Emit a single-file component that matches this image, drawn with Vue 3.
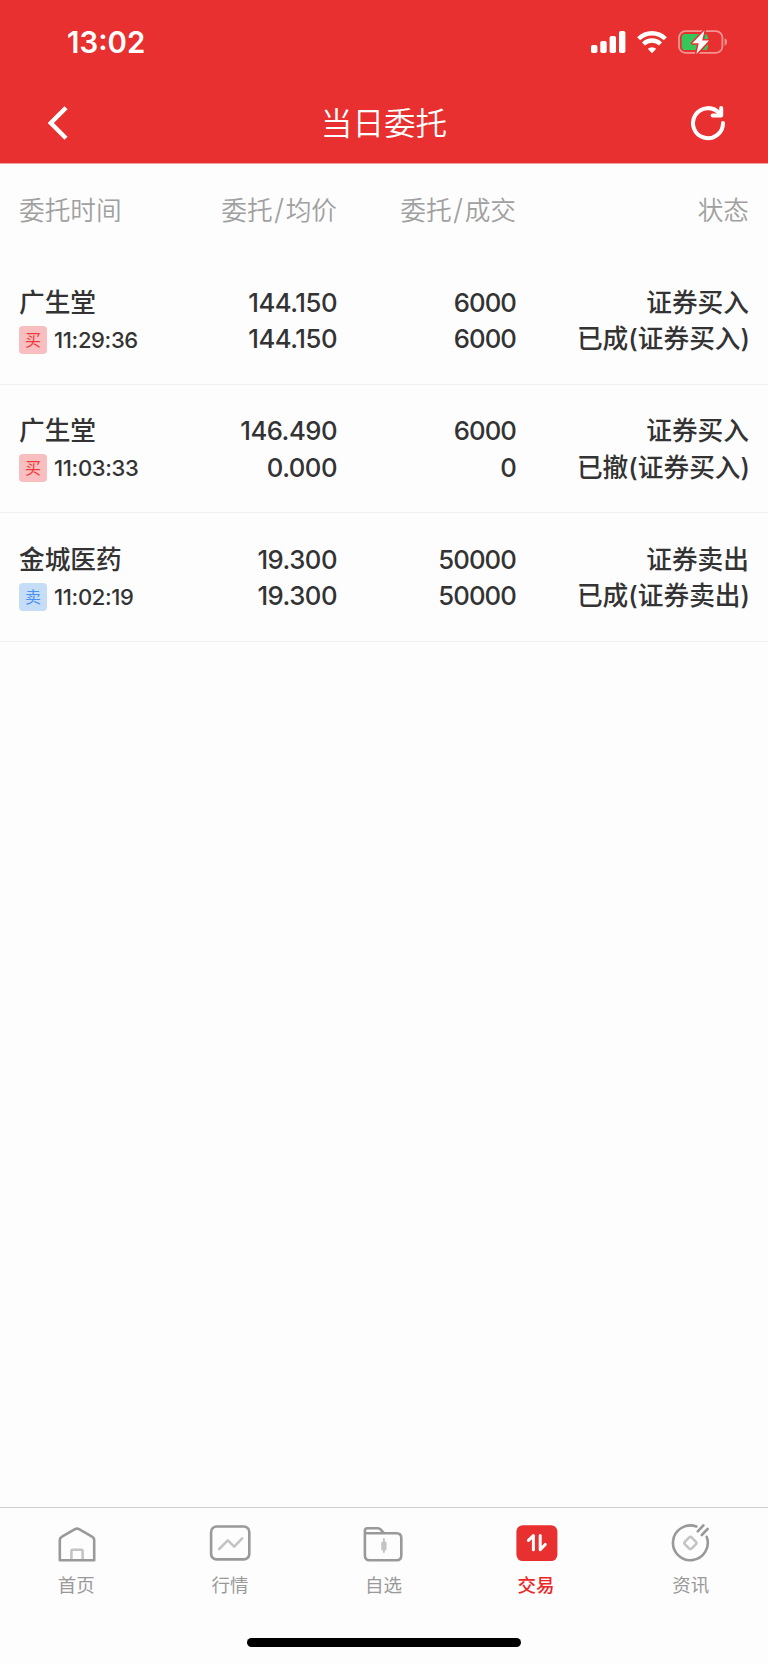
<script setup>
import { ref } from "vue";

const active = ref("trade");

const orders = ref([
  {
    id: 1,
    name: "广生堂",
    side: "买",
    time: "11:29:36",
    price: "144.150",
    avg: "144.150",
    amount: "6000",
    deal: "6000",
    type: "证券买入",
    status: "已成(证券买入)",
  },
  {
    id: 2,
    name: "广生堂",
    side: "买",
    time: "11:03:33",
    price: "146.490",
    avg: "0.000",
    amount: "6000",
    deal: "0",
    type: "证券买入",
    status: "已撤(证券买入)",
  },
  {
    id: 3,
    name: "金城医药",
    side: "卖",
    time: "11:02:19",
    price: "19.300",
    avg: "19.300",
    amount: "50000",
    deal: "50000",
    type: "证券卖出",
    status: "已成(证券卖出)",
  },
]);

const tabs = [
  { key: "home", label: "首页" },
  { key: "market", label: "行情" },
  { key: "favorite", label: "自选" },
  { key: "trade", label: "交易" },
  { key: "news", label: "资讯" },
];
</script>

<template>
  <main class="page">
    <header class="top">
      <div class="status-bar">
        <span class="clock">13:02</span>
        <div class="status-icons">
          <svg class="signal" width="35" height="22" viewBox="0 0 35 22" fill="#fff">
            <rect x="0" y="14" width="6.4" height="8" rx="1.8" />
            <rect x="9.3" y="10" width="6.4" height="12" rx="1.8" />
            <rect x="18.6" y="5" width="6.4" height="17" rx="1.8" />
            <rect x="28" y="0" width="6.4" height="22" rx="1.8" />
          </svg>
          <svg class="wifi" width="30" height="22" viewBox="0 0 30 22">
            <g fill="none" stroke="#fff" stroke-width="4.4">
              <path d="M1.7 7.7a19 19 0 0 1 26.6 0" />
              <path d="M6.5 13a12.2 12.2 0 0 1 17 0" />
            </g>
            <path
              d="M10.8 17.8a6.2 6.2 0 0 1 8.4 0l-3.7 3.9q-.5.5-1 0z"
              fill="#fff"
            />
          </svg>
          <svg class="battery" width="50" height="26" viewBox="0 0 50 26">
            <rect
              x="1"
              y="2.2"
              width="43.4"
              height="21.6"
              rx="6.4"
              fill="none"
              stroke="#f39392"
              stroke-width="1.8"
            />
            <path d="M46.7 9q2.4 1.2 2.4 4t-2.4 4z" fill="#f39392" />
            <rect x="3.7" y="5" width="26.3" height="16" rx="3.6" fill="#35c759" />
            <path
              d="M26.5 1.5L14.3 14.2h6.4L18.4 25 31 11.6h-6.8z"
              fill="#fff"
              stroke="#e83030"
              stroke-width="3"
              stroke-linejoin="round"
              paint-order="stroke"
            />
          </svg>
        </div>
      </div>
      <nav class="nav-bar">
        <svg class="back" width="24" height="36" viewBox="0 0 24 36">
          <path d="M20 2.8L4.8 18 20 33.2" fill="none" stroke="#fff" stroke-width="4.4" />
        </svg>
        <h1>当日委托</h1>
        <svg class="refresh" width="36" height="36" viewBox="0 0 36 36">
          <g
            fill="none"
            stroke="#fff"
            stroke-width="4"
            stroke-linecap="round"
            stroke-linejoin="round"
          >
            <path d="M33 18A15 15 0 1 1 29.5 8.5" />
            <path d="M31.2 3v7.6h-8.6" />
          </g>
        </svg>
      </nav>
    </header>

    <section class="list">
      <div class="row head">
        <span>委托时间</span>
        <span>委托<i>/</i>均价</span>
        <span>委托<i>/</i>成交</span>
        <span>状态</span>
      </div>
      <div v-for="item in orders" :key="item.id" class="row order">
        <div>
          <p>{{ item.name }}</p>
          <p class="when">
            <i :class="['tag', item.side === '买' ? 'buy' : 'sell']">{{ item.side }}</i>
            <span class="time">{{ item.time }}</span>
          </p>
        </div>
        <div class="price">
          <p>{{ item.price }}</p>
          <p>{{ item.avg }}</p>
        </div>
        <div class="amount">
          <p>{{ item.amount }}</p>
          <p>{{ item.deal }}</p>
        </div>
        <div class="status">
          <p>{{ item.type }}</p>
          <p>{{ item.status }}</p>
        </div>
      </div>
    </section>

    <footer class="bottom">
      <div class="tabs">
        <div
          v-for="tab in tabs"
          :key="tab.key"
          :class="['tab', { active: active === tab.key }]"
          @click="active = tab.key"
        >
          <svg
            width="44"
            height="40"
            viewBox="0 0 44 40"
            fill="none"
            stroke="#999"
            stroke-width="2.6"
            stroke-linecap="round"
            stroke-linejoin="round"
          >
            <template v-if="tab.key === 'home'">
              <path d="M16.4 37V28q0-1.3 1.3-1.3h8.6q1.3 0 1.3 1.3v9" stroke="#c4c4c4" />
              <path
                d="M4.8 37.3V17.5q0-2.6 2.2-3.8L20 6.2q2-1.1 4 0l13 7.5q2.2 1.2 2.2 3.8v19.8z"
              />
            </template>
            <template v-else-if="tab.key === 'market'">
              <rect x="3.1" y="3.5" width="38.2" height="32.9" rx="5.5" />
              <path d="M11.2 26l8.6-8.6 6.4 6.2 8-8.2" stroke="#c4c4c4" />
            </template>
            <template v-else-if="tab.key === 'favorite'">
              <path
                d="M2.9 10.3V7.6q0-2.4 2.4-2.4h10.6q1.6 0 2.6 1.1l3.4 3.9h12.6q4.8 0 4.8 4.8v17.4q0 4.8-4.8 4.8H7.7q-4.8 0-4.8-4.8zH21"
              />
              <path d="M21.9 16v13" stroke="#c4c4c4" stroke-width="2" />
              <rect x="19.2" y="18.4" width="5.4" height="9.2" rx="1.6" fill="#c4c4c4" stroke="none" />
            </template>
            <template v-else-if="tab.key === 'trade'">
              <rect x=".4" y="2.2" width="41" height="35.8" rx="6.4" fill="#e83030" stroke="none" />
              <path d="M12.4 17.4l5-4.8V26.8M24.2 12.4v14.4l5-5.4" stroke="#fff" stroke-width="3" />
            </template>
            <template v-else>
              <path d="M27.4 3.5A17.4 17.4 0 1 0 37.7 13.8" />
              <path d="M28.8 8.4l5.6-6M32.8 12l5.8-6" />
              <rect
                x="16.6"
                y="15.2"
                width="9.6"
                height="9.6"
                rx="2"
                transform="rotate(45 21.4 20)"
                stroke="#c4c4c4"
              />
            </template>
          </svg>
          <span>{{ tab.label }}</span>
        </div>
      </div>
      <div class="home-indicator"></div>
    </footer>
  </main>
</template>

<style>
body {
  margin: 0;
  background: #fdfdfd;
}
</style>

<style scoped>
.page {
  display: flex;
  flex-direction: column;
  width: 768px;
  height: 1663px;
  background: #fdfdfd;
  color: #333;
  font-family: Inter, "Noto Sans CJK SC", sans-serif;
}

h1,
p {
  margin: 0;
}

.top {
  height: 163px;
  background: #e83030;
  color: #fff;
  border-bottom: 1px solid #f4a3a3;
}

.status-bar {
  display: flex;
  justify-content: space-between;
  align-items: center;
  height: 84px;
  padding: 0 40px 0 67px;
}

.clock {
  font-size: 29.4px;
  font-weight: 600;
}

.status-icons {
  display: flex;
  align-items: center;
  gap: 11px;
}

.nav-bar {
  display: flex;
  justify-content: space-between;
  align-items: center;
  height: 78px;
  padding: 0 42px 0 46px;
}

.nav-bar h1 {
  padding: 0 0 4px 8px;
  font-size: 31.6px;
  font-weight: 350;
}

.row {
  display: grid;
  grid-template-columns: 160px 158px 179px 1fr;
  padding: 0 19px;
  font-size: 25.7px;
  text-align: right;
  white-space: nowrap;
}

.row > :first-child {
  text-align: left;
}

.head {
  height: 92px;
  line-height: 94px;
  color: #a0a0a0;
  font-weight: 350;
}

.head i {
  display: inline-block;
  width: 13px;
  font-size: 29px;
  font-style: normal;
  font-weight: 300;
  line-height: 1;
  text-align: center;
}

.order {
  box-sizing: border-box;
  height: 128.6px;
  padding-top: 28.7px;
  border-bottom: 1px solid #f0f0f0;
  font-weight: 500;
}

.order p {
  height: 36.6px;
  line-height: 36.6px;
}

.order .when {
  display: flex;
  align-items: center;
}

.price {
  font-weight: 450;
  letter-spacing: -0.5px;
}

.amount {
  font-weight: 450;
  letter-spacing: -0.9px;
}

.status p:last-child {
  margin-right: -1px;
}

.tag {
  width: 28px;
  height: 28px;
  border-radius: 4px;
  font-size: 16px;
  font-style: normal;
  font-weight: 400;
  line-height: 28px;
  text-align: center;
}

.buy {
  background: #f9bfc0;
  color: #f03b3b;
}

.sell {
  background: #c6ddf8;
  color: #4a90f0;
}

.time {
  margin-left: 7px;
  padding-top: 1px;
  font-size: 22px;
  font-weight: 450;
  letter-spacing: -0.35px;
}

.bottom {
  display: flex;
  flex-direction: column;
  align-items: center;
  height: 155px;
  margin-top: auto;
  border-top: 1px solid #ccc;
}

.tabs {
  display: flex;
  align-self: stretch;
  height: 130px;
}

.tab {
  display: flex;
  flex: 1;
  flex-direction: column;
  align-items: center;
  gap: 8px;
  padding-top: 15px;
  color: #999;
  font-size: 18.5px;
}

.tab span {
  margin-right: 1px;
}

.tab.active {
  color: #ee2626;
  font-weight: 500;
}

.tab.active span {
  margin-right: 3px;
}

.home-indicator {
  width: 274px;
  height: 9px;
  border-radius: 5px;
  background: #000;
}
</style>
